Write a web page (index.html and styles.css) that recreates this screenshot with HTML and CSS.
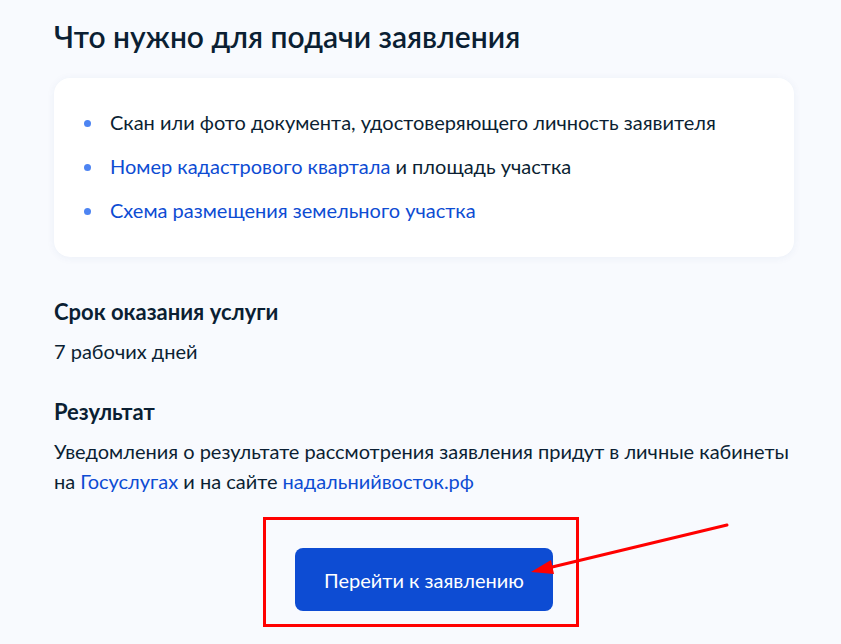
FILE: index.html
```html
<!DOCTYPE html>
<html lang="ru">
<head>
    <meta charset="UTF-8">
    <meta name="viewport" content="width=device-width, initial-scale=1.0">
    <title>Что нужно для подачи заявления</title>
    <link rel="stylesheet" href="styles.css">
</head>
<body>

    <div class="page">
        <h2 class="title">Что нужно для подачи заявления</h2>

        <div class="card">
            <ul class="docs">
                <li>Скан или фото документа, удостоверяющего личность заявителя</li>
                <li><a href="#">Номер кадастрового квартала</a> и площадь участка</li>
                <li><a href="#">Схема размещения земельного участка</a></li>
            </ul>
        </div>

        <div class="info">
            <h3>Срок оказания услуги</h3>
            <p>7 рабочих дней</p>
        </div>

        <div class="info">
            <h3>Результат</h3>
            <p>Уведомления о результате рассмотрения заявления придут в личные кабинеты на <a href="#">Госуслугах</a> и на сайте <a href="#">надальнийвосток.рф</a></p>
        </div>

        <div class="frame">
            <button class="go-button">Перейти к заявлению</button>
            <!-- red arrow pointing at the button -->
            <svg class="arrow" width="480" height="80" viewBox="0 0 480 80">
                <line x1="464" y1="8" x2="285" y2="51" stroke="#ff0000" stroke-width="3" stroke-linecap="round"/>
                <polygon points="268,55 288,43 291,57" fill="#ff0000"/>
            </svg>
        </div>
    </div>

</body>
</html>
```

FILE: styles.css
```css
body {
    margin: 0;
    background: #f8fafe;
    font-family: Lato, "Noto Sans", sans-serif;
    color: #0b1f33;
}
a {
    color: #0d4cd3;
    text-decoration: none;
}
.page {
    width: 740px;
    padding: 16px 0 0 54px;
}
.title {
    margin: 0 0 22px;
    font-size: 30px;
    line-height: 40px;
    font-weight: 600;
}
.card {
    background: #ffffff;
    border-radius: 16px;
    box-shadow: 0 1px 8px rgba(30, 60, 140, 0.06);
    padding: 32px 30px 35px;
}
.docs {
    list-style: none;
    margin: 0;
    padding: 0;
}
.docs li {
    font-size: 20px;
    line-height: 24px;
    margin-bottom: 20px;
}
.docs li:last-child { margin-bottom: 0; }
.docs li::before {
    content: "";
    display: inline-block;
    vertical-align: middle;
    width: 7px;
    height: 7px;
    border-radius: 50%;
    background: #4d84f2;
    margin: -2px 19px 0 0;
}
.info {
    margin-top: 41px;
}
.info + .info {
    margin-top: 32px;
}
.info h3 {
    margin: 0 0 10px;
    font-size: 22px;
    line-height: 28px;
    font-weight: 700;
}
.info p {
    margin: 0;
    font-size: 20px;
    line-height: 30px;
}
.frame {
    position: relative;
    width: fit-content;
    margin: 21px 0 0 209px;
    padding: 28px 23px 13px 29px;
    border: 3px solid #ff0000;
}
.go-button {
    display: block;
    width: 258px;
    height: 63px;
    background: #0d4cd3;
    color: white;
    border: none;
    border-radius: 8px;
    font-family: Lato, "Noto Sans", sans-serif;
    font-size: 20px;
    cursor: pointer;
}
.arrow {
    position: absolute;
    top: -3px;
    left: -3px;
    overflow: visible;
}
```
